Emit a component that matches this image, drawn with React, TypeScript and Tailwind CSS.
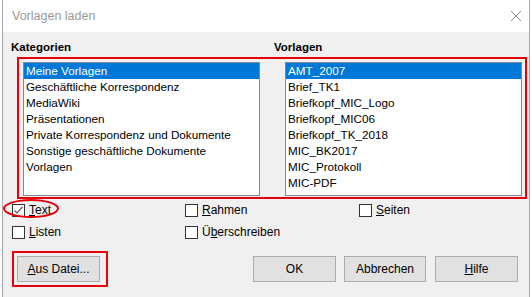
import type { ReactNode } from "react";

const categories = [
  "Meine Vorlagen",
  "Geschäftliche Korrespondenz",
  "MediaWiki",
  "Präsentationen",
  "Private Korrespondenz und Dokumente",
  "Sonstige geschäftliche Dokumente",
  "Vorlagen",
];

const templates = [
  "AMT_2007",
  "Brief_TK1",
  "Briefkopf_MIC_Logo",
  "Briefkopf_MIC06",
  "Briefkopf_TK_2018",
  "MIC_BK2017",
  "MIC_Protokoll",
  "MIC-PDF",
];

function ListBox({ items }: { items: string[] }) {
  return (
    <div className="h-[134px] w-[237px] border border-[#828790] bg-white text-[11.7px]">
      {items.map((item, index) => (
        <div
          key={item}
          className={
            index === 0
              ? "h-[16px] bg-[#0078d7] pl-[2px] leading-[16px] text-white"
              : "h-[16px] pl-[2px] leading-[16px] text-black"
          }
        >
          {item}
        </div>
      ))}
    </div>
  );
}

function CheckBox({ checked, children }: { checked?: boolean; children: ReactNode }) {
  return (
    <div className="flex h-[16px] items-center gap-[4px]">
      <div className="flex size-[13px] shrink-0 items-center justify-center border border-[#333333] bg-white">
        {checked ? (
          <svg width="11" height="11" viewBox="0 0 11 11" aria-hidden="true">
            <path d="M1.5 5.5 L4 8 L9.5 2" fill="none" stroke="#5a5a5a" strokeWidth="1.2" />
          </svg>
        ) : null}
      </div>
      <span className="leading-[16px]">{children}</span>
    </div>
  );
}

function DialogButton({ width, children }: { width: string; children: ReactNode }) {
  return (
    <button
      type="button"
      className={`${width} h-[26px] border border-[#adadad] bg-[#e1e1e1] text-[12px] leading-[24px] text-black`}
    >
      {children}
    </button>
  );
}

export default function App() {
  return (
    <div
      className="h-[297px] w-[532px] overflow-hidden bg-white text-[12px] text-black"
      style={{ fontFamily: '"Liberation Sans", Arial, sans-serif' }}
    >
      <div className="ml-[2px] flex h-[297px] w-[528px] flex-col border-x border-[#aaaaaa]">
        {/* title bar */}
        <div className="flex h-[32px] shrink-0 items-center justify-between bg-white pl-[9px] pr-[8px]">
          <span className="text-[12.5px] text-[#999999]">Vorlagen laden</span>
          <svg width="10" height="10" viewBox="0 0 10 10" aria-hidden="true">
            <path d="M0 0 L10 10 M10 0 L0 10" stroke="#8a8a8a" strokeWidth="1" />
          </svg>
        </div>

        <div className="flex flex-1 flex-col bg-[#f0f0f0]">
          <div className="flex pt-[7px] text-[11.5px] font-bold leading-[16px]">
            <span className="w-[263px] pl-[8px]">Kategorien</span>
            <span className="pl-[8px]">Vorlagen</span>
          </div>

          <div className="ml-[14px] mt-[2px] flex w-[510px] gap-[25px] border-2 border-[#e8000b] pb-[1px] pl-[4px] pr-[3px] pt-[3px]">
            <ListBox items={categories} />
            <ListBox items={templates} />
          </div>

          <div className="mt-[3px] flex pl-[9px]">
            <div className="relative w-[173px]">
              <CheckBox checked>
                <span className="underline underline-offset-1">T</span>ext
              </CheckBox>
              <div className="pointer-events-none absolute -left-[9px] -top-[3px] h-[19px] w-[56px] rounded-[50%] border-2 border-[#e8000b]" />
            </div>
            <div className="w-[174px]">
              <CheckBox>
                <span className="underline underline-offset-1">R</span>ahmen
              </CheckBox>
            </div>
            <CheckBox>
              <span className="underline underline-offset-1">S</span>eiten
            </CheckBox>
          </div>

          <div className="mt-[6px] flex pl-[9px]">
            <div className="w-[173px]">
              <CheckBox>
                <span className="underline underline-offset-1">L</span>isten
              </CheckBox>
            </div>
            <CheckBox>
              Ü<span className="underline underline-offset-1">b</span>erschreiben
            </CheckBox>
          </div>

          <div className="mt-[11px] flex items-start pl-[9px] pr-[11px]">
            <div className="border-2 border-[#e8000b] pb-[3px] pl-[3px] pr-[6px] pt-[3px]">
              <DialogButton width="w-[83px]">
                <span className="underline underline-offset-1">A</span>us Datei...
              </DialogButton>
            </div>
            <div className="ml-auto mt-[5px] flex">
              <DialogButton width="w-[83px]">OK</DialogButton>
              <div className="ml-[8px]">
                <DialogButton width="w-[82px]">Abbrechen</DialogButton>
              </div>
              <div className="ml-[9px]">
                <DialogButton width="w-[83px]">
                  <span className="underline underline-offset-1">H</span>ilfe
                </DialogButton>
              </div>
            </div>
          </div>
        </div>
      </div>
    </div>
  );
}
